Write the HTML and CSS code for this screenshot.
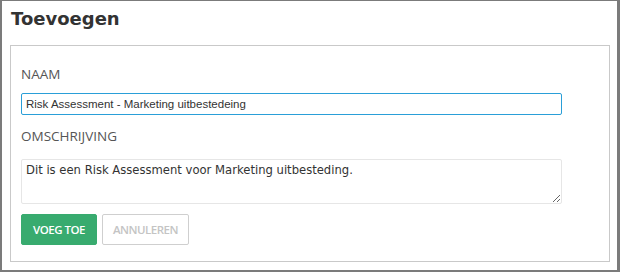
FILE: index.html
```html
<!DOCTYPE html>
<html lang="nl">
  <head>
    <meta charset="UTF-8" />
    <meta name="viewport" content="width=device-width, initial-scale=1.0" />
    <title>Toevoegen</title>
    <link rel="stylesheet" href="styles.css">
  </head>
  <body>
    <div class="window">
      <h1 class="title">Toevoegen</h1>
      <div class="panel">
        <form class="form">
          <label class="label" for="naam">NAAM</label>
          <input type="text" id="naam" class="field" value="Risk Assessment - Marketing uitbestedeing" />
          <label class="label" for="omschrijving">OMSCHRIJVING</label>
          <textarea id="omschrijving" class="area">Dit is een Risk Assessment voor Marketing uitbesteding.</textarea>
          <div class="actions">
            <button type="button" class="btn btn-primary">VOEG TOE</button>
            <button type="button" class="btn btn-default">ANNULEREN</button>
          </div>
        </form>
      </div>
    </div>
  </body>
</html>
```

FILE: styles.css
```css
html, body {
  margin: 0;
  padding: 0;
  background: #fff;
}
.window {
  box-sizing: border-box;
  width: 620px;
  height: 272px;
  border-style: solid;
  border-color: #7b7b7b;
  border-width: 1px 3px 2px 2px;
  font-family: "Open Sans", sans-serif;
}
.title {
  margin: 0;
  padding: 6px 0 0 9px;
  height: 28px;
  line-height: 24px;
  font-family: "DejaVu Sans", Verdana, sans-serif;
  font-size: 18px;
  font-weight: bold;
  color: #333;
}
.panel {
  box-sizing: border-box;
  margin: 10px 0 0 8px;
  width: 600px;
  height: 217px;
  border: 1px solid #c9c9c9;
  padding: 18px 10px 0 10px;
}
.form {
  display: flex;
  flex-direction: column;
  width: 541px;
}
.label {
  font-size: 13.5px;
  line-height: 20px;
  color: #555;
}
.field {
  box-sizing: border-box;
  margin: 9px 0 11px 0;
  height: 22px;
  padding: 0 4px;
  border: 1px solid #2a9fd8;
  border-radius: 2px;
  outline: none;
  font-family: "Liberation Sans", Arial, sans-serif;
  font-size: 11.5px;
  color: #333;
}
.area {
  box-sizing: border-box;
  margin: 13px 0 10px 0;
  height: 45px;
  padding: 3px 4px;
  border: 1px solid #e6e6e6;
  border-radius: 2px;
  outline: none;
  resize: vertical;
  font-family: "DejaVu Sans", Verdana, sans-serif;
  font-size: 11.6px;
  color: #333;
}
.actions {
  display: flex;
  gap: 5px;
}
.btn {
  box-sizing: border-box;
  height: 31px;
  padding: 0;
  border-radius: 2px;
  font-family: "Open Sans", sans-serif;
  font-size: 11.5px;
  font-weight: 600;
  letter-spacing: -0.5px;
  white-space: nowrap;
  cursor: pointer;
}
.btn-primary {
  width: 76px;
  border: 1px solid #38ab6f;
  background-color: #38ab6f;
  color: #fff;
}
.btn-default {
  width: 87px;
  border: 1px solid #cfcfcf;
  background-color: #fff;
  color: #c4c4c4;
}
```
